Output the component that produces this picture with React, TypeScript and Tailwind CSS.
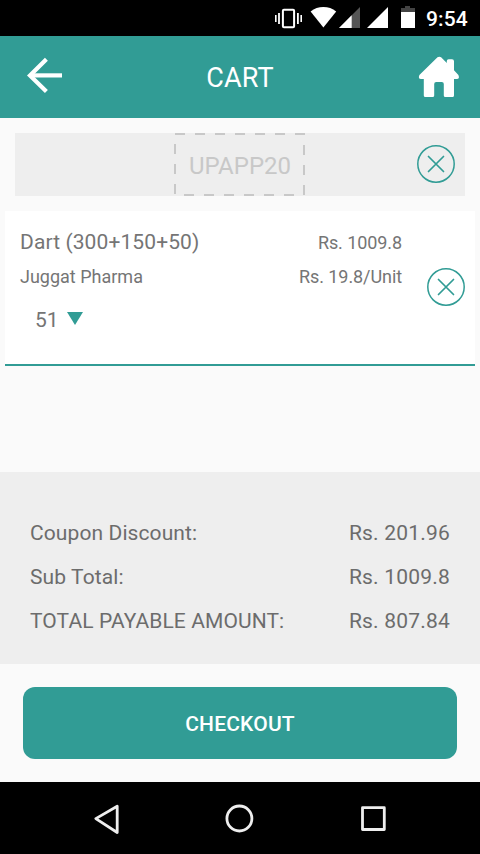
type SummaryLine = { label: string; value: string }

const summary: SummaryLine[] = [
    { label: "Coupon Discount:", value: "Rs. 201.96" },
    { label: "Sub Total:", value: "Rs. 1009.8" },
    { label: "TOTAL PAYABLE AMOUNT:", value: "Rs. 807.84" },
]

function RemoveButton() {
    return (
        <button type="button" aria-label="Remove" className="block h-[38px] w-[38px] shrink-0">
            <svg viewBox="0 0 38 38" className="block h-full w-full" fill="none" stroke="#319c95">
                <circle cx="19" cy="19" r="18.2" strokeWidth="1.5" />
                <path d="M11.5 11.5 26.5 26.5M26.5 11.5 11.5 26.5" strokeWidth="1.7" strokeLinecap="round" />
            </svg>
        </button>
    )
}

function StatusBar() {
    return (
        <div className="flex h-9 shrink-0 items-center justify-end bg-black pr-3 text-white">
            <svg viewBox="0 0 144 36" className="h-9 w-36" fill="#fff">
                {/* vibrate */}
                <rect x="10.9" y="9.8" width="11.2" height="17.4" rx="1" fill="none" stroke="#fff" strokeWidth="2" />
                <path d="M3 15h1.6v7H3zM6.1 13h1.8v11H6.1zM25 13h1.8v11H25zM28.4 15H30v7h-1.6z" />
                {/* wifi */}
                <path d="M38.6 11.6C42.4 8.4 46.6 7 51.4 7s9 1.4 12.8 4.6L51.4 27.4z" />
                {/* signal */}
                <path d="M88 7v21H67z" fill="#555" />
                <path d="M79.7 15.3V28H67z" />
                <path d="M116 7v21H95z" />
                {/* battery */}
                <path d="M133 6h5v2h5v4h-14V8h4z" fill="#444" />
                <path d="M129 12h14v16h-14z" />
            </svg>
            <span className="ml-[10px] w-[42px] whitespace-nowrap pt-0.5 text-[21px] font-medium leading-[34px] tracking-[0.1px]">9:54</span>
        </div>
    )
}

function Header() {
    return (
        <header className="flex h-[82px] shrink-0 items-center justify-between bg-[#319c95] text-white">
            <button type="button" aria-label="Back" className="h-full w-20">
                <svg viewBox="0 0 80 82" className="block h-full w-full" fill="none" stroke="#fff" strokeWidth="4.2">
                    <path d="M62 39.4H31" />
                    <path d="M46.4 23.3 30 39.4 46.4 55.5" />
                </svg>
            </button>
            <h1 className="pt-0.5 text-[27px] leading-[80px] tracking-[0.2px]">CART</h1>
            <button type="button" aria-label="Home" className="h-full w-20">
                <svg viewBox="0 0 80 82" className="block h-full w-full" fill="#fff">
                    <path d="M37.5 21.3q1.800-1.300 3.600 0l5.700 5.700v-2q0-1.800 1.800-1.800H52q2 0 2 2v9l4.400 4.800q1.600 3.900-1.600 4H54v16.400q0 1.600-1.600 1.600h-7q-1.600 0-1.600-1.600V48q0-2-2-2h-5.600q-2 0-2 2v11.400q0 1.600-1.600 1.600h-7.200q-1.600 0-1.600-1.600V43H21q-3.200-.1-1.600-4z" />
                </svg>
            </button>
        </header>
    )
}

function Coupon() {
    return (
        <section className="mx-[15px] mt-[15px] grid h-[63px] grid-cols-[1fr_131px_1fr] items-center bg-[#eee]">
            <div className="relative col-start-2 flex h-full items-center justify-center">
                <svg viewBox="0 0 131 63" className="absolute -left-[0.5px] top-0 h-full w-full" fill="none">
                    <rect x="1" y="1" width="129" height="61" stroke="#c8c8c8" strokeWidth="2" strokeDasharray="10 10" />
                </svg>
                <span className="relative top-px text-2xl text-[#c8c8c8]">UPAPP20</span>
            </div>
            <div className="flex justify-end pb-0.5 pr-[10px]">
                <RemoveButton />
            </div>
        </section>
    )
}

function CartItem() {
    return (
        <section className="mx-[5px] mt-[15px] flex h-[155px] border-b-2 border-[#319c95] bg-white pl-[15px] pr-[10px] text-[#757575]">
            <div className="w-[382px] pt-[15px]">
                <div className="flex h-[33px] items-baseline justify-between">
                    <span className="text-[21px] leading-8 tracking-[0.1px]">Dart (300+150+50)</span>
                    <span className="text-lg leading-8 tracking-[-0.08px]">Rs. 1009.8</span>
                </div>
                <div className="mt-[6px] flex items-center justify-between text-lg leading-6">
                    <span>Juggat Pharma</span>
                    <span className="tracking-[-0.08px]">Rs. 19.8/Unit</span>
                </div>
                <button type="button" className="ml-[15px] mt-[15px] flex items-center text-[21px] leading-8">
                    51
                    <svg viewBox="0 0 16 13" className="-mt-[3px] ml-2 h-[13px] w-4" fill="#319c95">
                        <path d="M0 0h16L8 13z" />
                    </svg>
                </button>
            </div>
            <div className="ml-auto pt-[57px]">
                <RemoveButton />
            </div>
        </section>
    )
}

function Summary() {
    return (
        <section className="mt-[106px] h-48 bg-[#eee] px-[30px] pt-10 text-[21px] text-[#6c6c6c]">
            {summary.map((line) => (
                <div key={line.label} className="flex h-11 items-center justify-between">
                    <span className="tracking-[0.1px]">{line.label}</span>
                    <span className="tracking-[0.2px]">{line.value}</span>
                </div>
            ))}
        </section>
    )
}

function NavBar() {
    return (
        <nav className="flex h-[72px] shrink-0 items-center justify-center bg-black">
            <svg viewBox="0 0 480 72" className="h-[72px] w-[480px]" fill="none" stroke="#eee" strokeWidth="2.8" strokeLinejoin="round">
                <path d="M117.200 24.300v26.200L95.800 36.600z" />
                <circle cx="239.400" cy="36.500" r="12.500" />
                <rect x="362.500" y="25.700" width="21.800" height="21.800" />
            </svg>
        </nav>
    )
}

export default function App() {
    return (
        <div className="flex h-[854px] w-[480px] flex-col overflow-hidden bg-[#fafafa] font-['Roboto',sans-serif]">
            <StatusBar />
            <Header />
            <main className="flex-1">
                <Coupon />
                <CartItem />
                <Summary />
                <button type="button" className="mx-[23px] mt-[23px] block h-[72px] w-[434px] rounded-xl bg-[#319c95] pt-[3px] text-[21px] font-medium tracking-[0.2px] text-white">
                    CHECKOUT
                </button>
            </main>
            <NavBar />
        </div>
    )
}
